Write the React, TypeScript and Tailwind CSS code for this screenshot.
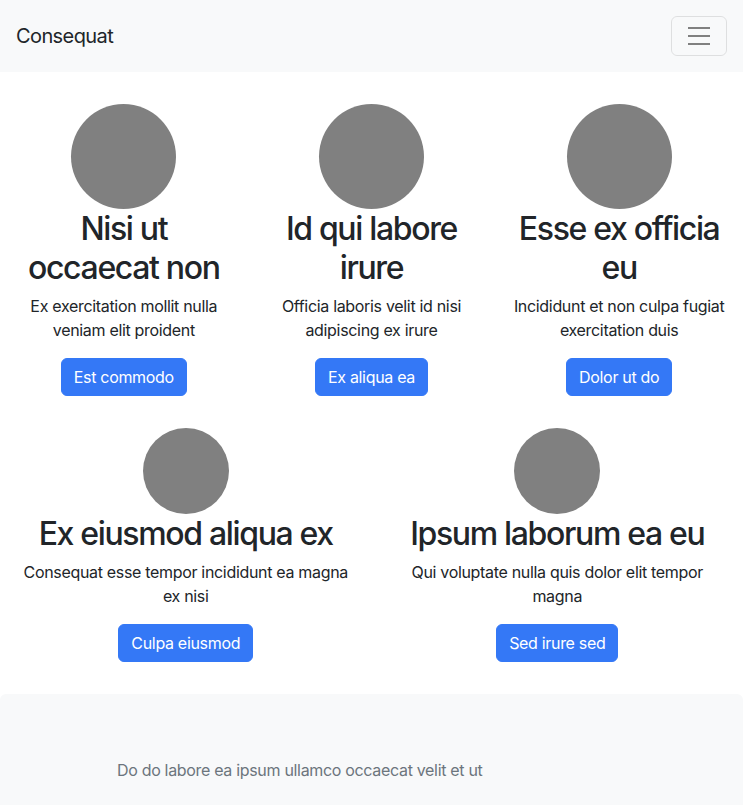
type Card = {
  title: string
  text: string
  button: string
}

const topCards: Card[] = [
  {
    title: 'Nisi ut occaecat non',
    text: 'Ex exercitation mollit nulla veniam elit proident',
    button: 'Est commodo',
  },
  {
    title: 'Id qui labore irure',
    text: 'Officia laboris velit id nisi adipiscing ex irure',
    button: 'Ex aliqua ea',
  },
  {
    title: 'Esse ex officia eu',
    text: 'Incididunt et non culpa fugiat exercitation duis',
    button: 'Dolor ut do',
  },
]

const bottomCards: Card[] = [
  {
    title: 'Ex eiusmod aliqua ex',
    text: 'Consequat esse tempor incididunt ea magna ex nisi',
    button: 'Culpa eiusmod',
  },
  {
    title: 'Ipsum laborum ea eu',
    text: 'Qui voluptate nulla quis dolor elit tempor magna',
    button: 'Sed irure sed',
  },
]

function Feature({ card, small }: { card: Card; small?: boolean }) {
  return (
    <div className="flex flex-col items-center px-4 text-center">
      <div
        className={
          small
            ? 'w-[86px] h-[86px] rounded-full bg-[#808080]'
            : 'w-[105px] h-[105px] rounded-full bg-[#808080]'
        }
      />
      <h2 className="text-[32px] leading-[39px] font-medium tracking-[-0.042em] text-[#212529] mb-[7px]">
        {card.title}
      </h2>
      <p className="text-base leading-6 tracking-[-0.02em] text-[#212529] mb-4">
        {card.text}
      </p>
      <button className="px-3 py-[6px] border border-[#3478f6] bg-[#3478f6] text-white text-base leading-6 tracking-[-0.02em] rounded-md">
        {card.button}
      </button>
    </div>
  )
}

export default function App() {
  return (
    <div className="min-h-screen bg-white font-['Inter',sans-serif]">
      {/* Навбар */}
      <nav className="h-[72px] bg-[#f8f9fa] flex items-center justify-between px-4">
        <span className="text-xl tracking-[-0.03em] text-[#212529]">Consequat</span>
        <button className="w-14 h-10 flex items-center justify-center border border-black/10 rounded-md">
          <svg width="30" height="30" viewBox="0 0 30 30">
            <path
              d="M4 7h22M4 15h22M4 23h22"
              stroke="#808080"
              strokeWidth="2"
              strokeLinecap="butt"
            />
          </svg>
        </button>
      </nav>

      {/* Карточки */}
      <main className="pt-8">
        <div className="grid grid-cols-3">
          {topCards.map((c) => (
            <Feature key={c.title} card={c} />
          ))}
        </div>
        <div className="grid grid-cols-2 mt-8">
          {bottomCards.map((c) => (
            <Feature key={c.title} card={c} small />
          ))}
        </div>
      </main>

      {/* Футер */}
      <footer className="mt-8 bg-[#f8f9fa] rounded-t-md pt-16 pb-6 pl-[117px]">
        <p className="text-base leading-6 tracking-[-0.02em] text-[#6c757d]">
          Do do labore ea ipsum ullamco occaecat velit et ut
        </p>
      </footer>
    </div>
  )
}
